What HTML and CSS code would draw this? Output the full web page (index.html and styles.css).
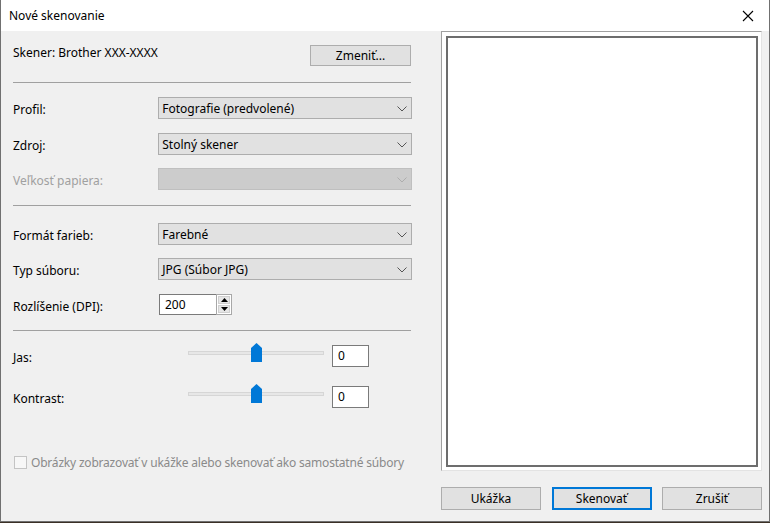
FILE: index.html
```html
<!DOCTYPE html>
<html lang="sk">
<head>
    <meta charset="UTF-8">
    <meta name="viewport" content="width=device-width, initial-scale=1.0">
    <title>Nové skenovanie</title>
    <link rel="stylesheet" href="styles.css">
</head>
<body>
    <div class="window">
        <div class="titlebar">
            <span class="title">Nové skenovanie</span>
            <svg class="close" width="12" height="12" viewBox="0 0 12 12">
                <path d="M1 1 L11 11 M11 1 L1 11" stroke="#000" stroke-width="1.1" fill="none"/>
            </svg>
        </div>

        <div class="content">
            <div class="settings">
                <div class="scanner-row">
                    <span>Skener: Brother XXX-XXXX</span>
                    <button class="btn btn-change">Zmeniť...</button>
                </div>

                <div class="sep sep-first"></div>

                <div class="field field-profile">
                    <label>Profil:</label>
                    <div class="select">
                        <span>Fotografie (predvolené)</span>
                        <svg class="chevron" width="10" height="6" viewBox="0 0 10 6"><path d="M0.5 0.5 L5 5 L9.5 0.5" stroke="#555" fill="none"/></svg>
                    </div>
                </div>

                <div class="field field-source">
                    <label>Zdroj:</label>
                    <div class="select">
                        <span>Stolný skener</span>
                        <svg class="chevron" width="10" height="6" viewBox="0 0 10 6"><path d="M0.5 0.5 L5 5 L9.5 0.5" stroke="#555" fill="none"/></svg>
                    </div>
                </div>

                <div class="field field-paper disabled">
                    <label>Veľkosť papiera:</label>
                    <div class="select">
                        <span></span>
                        <svg class="chevron" width="10" height="6" viewBox="0 0 10 6"><path d="M0.5 0.5 L5 5 L9.5 0.5" stroke="#adadad" fill="none"/></svg>
                    </div>
                </div>

                <div class="sep sep-second"></div>

                <div class="field field-color">
                    <label>Formát farieb:</label>
                    <div class="select">
                        <span>Farebné</span>
                        <svg class="chevron" width="10" height="6" viewBox="0 0 10 6"><path d="M0.5 0.5 L5 5 L9.5 0.5" stroke="#555" fill="none"/></svg>
                    </div>
                </div>

                <div class="field field-type">
                    <label>Typ súboru:</label>
                    <div class="select">
                        <span>JPG (Súbor JPG)</span>
                        <svg class="chevron" width="10" height="6" viewBox="0 0 10 6"><path d="M0.5 0.5 L5 5 L9.5 0.5" stroke="#555" fill="none"/></svg>
                    </div>
                </div>

                <div class="field field-dpi">
                    <label>Rozlíšenie (DPI):</label>
                    <div class="spin">
                        <div class="spin-input">200</div>
                        <div class="spin-buttons">
                            <div class="spin-btn"><svg width="7" height="4" viewBox="0 0 7 4"><path d="M3.5 0 L7 4 L0 4 Z" fill="#000"/></svg></div>
                            <div class="spin-btn"><svg width="7" height="4" viewBox="0 0 7 4"><path d="M0 0 L7 0 L3.5 4 Z" fill="#000"/></svg></div>
                        </div>
                    </div>
                </div>

                <div class="sep sep-third"></div>

                <div class="slider-row slider-brightness">
                    <label>Jas:</label>
                    <div class="slider">
                        <div class="track"></div>
                        <svg class="thumb" width="11" height="19" viewBox="0 0 11 19"><path d="M0 5 L5.5 0 L11 5 L11 19 L0 19 Z" fill="#0078d7"/></svg>
                    </div>
                    <div class="num-box">0</div>
                </div>

                <div class="slider-row slider-contrast">
                    <label>Kontrast:</label>
                    <div class="slider">
                        <div class="track"></div>
                        <svg class="thumb" width="11" height="19" viewBox="0 0 11 19"><path d="M0 5 L5.5 0 L11 5 L11 19 L0 19 Z" fill="#0078d7"/></svg>
                    </div>
                    <div class="num-box">0</div>
                </div>

                <div class="check-row">
                    <span class="checkbox"></span>
                    <span class="check-label">Obrázky zobrazovať v ukážke alebo skenovať ako samostatné súbory</span>
                </div>
            </div>

            <div class="preview-col">
                <div class="preview">
                    <div class="preview-inner"></div>
                </div>
                <div class="actions">
                    <button class="btn btn-action">Ukážka</button>
                    <button class="btn btn-action btn-default">Skenovať</button>
                    <button class="btn btn-action">Zrušiť</button>
                </div>
            </div>
        </div>
    </div>
</body>
</html>
```

FILE: styles.css
```css
body {
    margin: 0;
    padding: 0;
    background: #3b3026;
    font-family: "Noto Sans", "Open Sans", sans-serif;
    font-size: 12px;
    color: #000;
}

.window {
    width: 768px;
    height: 521px;
    border: 1px solid #707070;
    border-top: none;
    background: #f0f0f0;
    display: flex;
    flex-direction: column;
}

.titlebar {
    height: 31px;
    background: #fff;
    display: flex;
    align-items: center;
    justify-content: space-between;
    padding: 0 15px 0 8px;
}

.title {
    font-size: 12px;
}

.content {
    display: flex;
    flex: 1;
}

/* left column */
.settings {
    width: 399px;
    padding-left: 12px;
    margin-right: 29px;
    flex-shrink: 0;
}

.scanner-row {
    display: flex;
    justify-content: space-between;
    align-items: flex-start;
    margin-top: 14px;
    line-height: 16px;
}

.btn {
    font-family: inherit;
    font-size: 12px;
    color: #000;
    background: #e1e1e1;
    border: 1px solid #adadad;
    padding: 0;
    margin: 0;
}

.btn-change {
    width: 101px;
    height: 21px;
    margin-right: 1px;
}

.sep {
    width: 398px;
    height: 1px;
    background: #a0a0a0;
}

.sep-first { margin-top: 16px; }
.sep-second { margin-top: 15px; }
.sep-third { margin-top: 15px; }

.field {
    display: flex;
    align-items: center;
}

.field label {
    width: 146px;
    padding-top: 3px;
}

.field-profile { margin-top: 14px; }
.field-source { margin-top: 14px; }
.field-paper { margin-top: 13px; }
.field-color { margin-top: 17px; }
.field-type { margin-top: 13px; }
.field-dpi { margin-top: 14px; }

.select {
    width: 246px;
    height: 20px;
    background: #e1e1e1;
    border: 1px solid #adadad;
    display: flex;
    align-items: center;
    justify-content: space-between;
    padding: 0 4px 0 3px;
}

.chevron {
    margin-top: 1px;
}

.disabled label {
    color: #a0a0a0;
}

.disabled .select {
    background: #cccccc;
    border-color: #bfbfbf;
}

.spin {
    display: flex;
    height: 21px;
}

.spin-input {
    width: 51px;
    height: 19px;
    background: #fff;
    border: 1px solid #7a7a7a;
    border-right: none;
    padding-left: 5px;
    line-height: 19px;
}

.spin-buttons {
    width: 16px;
    display: flex;
    flex-direction: column;
    border: 1px solid #a8a8a8;
    box-sizing: border-box;
    background: #fff;
    padding: 1px;
    gap: 1px;
}

.spin-btn {
    flex: 1;
    background: #e6e6e6;
    border: 1px solid #d0d0d0;
    display: flex;
    align-items: center;
    justify-content: center;
}

/* sliders */
.slider-row {
    display: flex;
    align-items: center;
    height: 22px;
}

.slider-row label {
    width: 175px;
    padding-top: 2px;
}

.slider-brightness { margin-top: 14px; }
.slider-contrast { margin-top: 19px; }

.slider {
    position: relative;
    width: 136px;
    height: 22px;
    margin-right: 8px;
}

.track {
    margin-top: 6px;
    height: 2px;
    background: #e7e7e7;
    border: 1px solid #d6d6d6;
}

.thumb {
    position: absolute;
    left: 63px;
    top: -2px;
}

.num-box {
    width: 30px;
    height: 20px;
    background: #fff;
    border: 1px solid #7a7a7a;
    padding-left: 5px;
    line-height: 20px;
}

.check-row {
    display: flex;
    align-items: center;
    margin-top: 46px;
    color: #8a8a8a;
    white-space: nowrap;
}

.check-label {
    letter-spacing: -0.2px;
}

.checkbox {
    flex-shrink: 0;
    width: 11px;
    height: 11px;
    border: 1px solid #c4c4c4;
    background: #f7f7f7;
    margin: 0 4px 0 1px;
}

/* right column */
.preview-col {
    width: 321px;
    display: flex;
    flex-direction: column;
}

.preview {
    height: 431px;
    background: #fff;
    border: 1px solid #a0a0a0;
    border-right-color: #e3e3e3;
    border-bottom-color: #e3e3e3;
    padding: 4px 3px 3px 4px;
}

.preview-inner {
    height: 427px;
    border: 2px solid #6d6d6d;
}

.actions {
    display: flex;
    justify-content: space-between;
    margin-top: 16px;
}

.btn-action {
    width: 100px;
    height: 23px;
}

.btn-default {
    border: 2px solid #0078d7;
}
```
